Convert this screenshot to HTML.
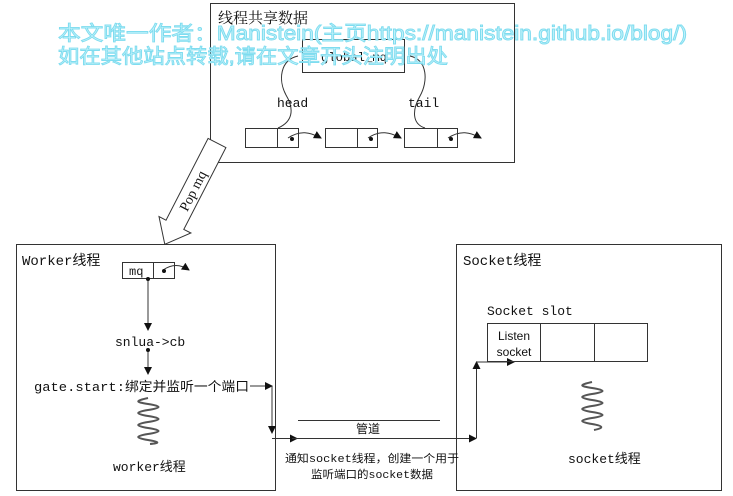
<!DOCTYPE html>
<html><head><meta charset="utf-8"><style>
html,body{margin:0;padding:0;background:#fff;width:733px;height:496px;overflow:hidden}
svg{display:block}
.s{font-family:"Liberation Serif","Noto Serif CJK SC",serif;fill:#111}
.m{font-family:"Liberation Mono","Noto Sans CJK SC",monospace;fill:#111}
.a{font-family:"Liberation Sans","Noto Sans CJK SC",sans-serif;fill:#111}
.w{font-family:"Liberation Sans","Noto Sans CJK SC",sans-serif;fill:#c4f3fb;stroke:#7fdcef;stroke-width:0.9}
</style></head><body>
<svg width="733" height="496" viewBox="0 0 733 496" xmlns="http://www.w3.org/2000/svg">
<defs>
<marker id="ar" markerWidth="8" markerHeight="8" refX="7" refY="4" orient="auto" markerUnits="userSpaceOnUse"><path d="M0,0 L8,4 L0,8 Z" fill="#111"/></marker>
</defs>
<g fill="none" stroke="#333" stroke-width="1">
<rect x="210.5" y="3.5" width="304" height="159"/>
<rect x="302.5" y="39.5" width="102" height="33"/>
<rect x="245.5" y="128.5" width="53" height="19"/><line x1="277.5" y1="128" x2="277.5" y2="147"/>
<rect x="325.5" y="128.5" width="52" height="19"/><line x1="357.5" y1="128" x2="357.5" y2="147"/>
<rect x="404.5" y="128.5" width="53" height="19"/><line x1="437.5" y1="128" x2="437.5" y2="147"/>
<path d="M298,56 C280,60 278,80 286,95 C295,110 292,122 278,128"/>
<path d="M410,56 C428,60 428,82 420,96 C412,110 412,124 425,128"/>
<path d="M288,138 C300,130 310,132 321,138" marker-end="url(#ar)"/>
<path d="M368,138 C380,130 390,132 401,138" marker-end="url(#ar)"/>
<path d="M448,138 C460,130 470,132 481,138" marker-end="url(#ar)"/>
<path d="M208.1,138.4 L225.9,147.6 L183.8,229.4 L190.9,233 L164.8,244.3 L159,216.6 L166,220.2 Z" fill="#fff"/>
<rect x="16.5" y="244.5" width="259" height="246"/>
<rect x="122.5" y="262.5" width="52" height="16"/><line x1="153.5" y1="262" x2="153.5" y2="279"/>
<path d="M163,270 C172,264 180,264 189,270" marker-end="url(#ar)"/>
<line x1="148" y1="279" x2="148" y2="330" marker-end="url(#ar)"/>
<line x1="148" y1="350" x2="148" y2="374" marker-end="url(#ar)"/>
<line x1="250" y1="386" x2="272" y2="386" marker-end="url(#ar)"/>
<line x1="272" y1="386" x2="272" y2="433" marker-end="url(#ar)"/>
<line x1="272" y1="438.5" x2="297" y2="438.5" marker-end="url(#ar)"/>
<line x1="292" y1="438.5" x2="476" y2="438.5"/>
<line x1="458" y1="438.5" x2="476" y2="438.5" marker-end="url(#ar)"/>
<line x1="476.5" y1="438" x2="476.5" y2="362" marker-end="url(#ar)"/>
<line x1="476" y1="362" x2="514" y2="362" marker-end="url(#ar)"/>
<line x1="298" y1="420.5" x2="440" y2="420.5"/>
<rect x="456.5" y="244.5" width="265" height="246"/>
<rect x="487.5" y="323.5" width="160" height="38"/>
<line x1="540.5" y1="323" x2="540.5" y2="362"/><line x1="594.5" y1="323" x2="594.5" y2="362"/>
</g>
<g fill="#111">
<circle cx="292" cy="139" r="2"/><circle cx="371" cy="139" r="2"/><circle cx="451" cy="139" r="2"/>
<circle cx="164" cy="271" r="2"/><circle cx="148" cy="279" r="2"/><circle cx="148" cy="350" r="2"/>
</g>
<g fill="none" stroke="#555" stroke-width="2">
<path d="M148,398 C135,401 135,402 148,404 C162,406 162,408 148,410 C135,412 135,414 148,416 C162,418 162,420 148,422 C135,424 135,426 148,428 C162,430 162,432 148,434 C135,436 135,438 148,440 C160,442 160,443 150,444"/>
<path d="M592,382 C579,385 579,386 592,388 C606,390 606,392 592,394 C579,396 579,398 592,400 C606,402 606,404 592,406 C579,408 579,410 592,412 C606,414 606,416 592,418 C579,420 579,422 592,424 C604,426 604,428 594,430"/>
</g>
<text class="s" x="218" y="23" font-size="15">线程共享数据</text>
<text class="m" x="321" y="61" font-size="12" textLength="66" lengthAdjust="spacingAndGlyphs">global_mq</text>
<text class="m" x="277" y="107" font-size="13">head</text>
<text class="m" x="408" y="107" font-size="13">tail</text>
<text class="s" font-size="14" transform="translate(197,193) rotate(-63)" text-anchor="middle">Pop mq</text>
<text class="m" x="22" y="265" font-size="14">Worker线程</text>
<text class="m" x="129" y="275" font-size="12">mq</text>
<text class="m" x="115" y="346" font-size="13">snlua-&gt;cb</text>
<text class="m" x="34" y="391" font-size="13" textLength="215" lengthAdjust="spacingAndGlyphs">gate.start:绑定并监听一个端口</text>
<text class="m" x="113" y="471" font-size="13">worker线程</text>
<text class="a" x="356" y="433" font-size="12">管道</text>
<text class="m" x="372" y="462" font-size="11" text-anchor="middle" textLength="174" lengthAdjust="spacingAndGlyphs">通知socket线程，创建一个用于</text>
<text class="m" x="372" y="478" font-size="11" text-anchor="middle" textLength="122" lengthAdjust="spacingAndGlyphs">监听端口的socket数据</text>
<text class="m" x="463" y="265" font-size="14">Socket线程</text>
<text class="m" x="487" y="315" font-size="13">Socket slot</text>
<text class="a" x="514" y="340" font-size="12" text-anchor="middle">Listen</text>
<text class="a" x="514" y="356" font-size="12" text-anchor="middle">socket</text>
<text class="m" x="568" y="463" font-size="13">socket线程</text>
<text class="w" x="58" y="40" font-size="20" textLength="629" lengthAdjust="spacingAndGlyphs">本文唯一作者：Manistein(主页https://manistein.github.io/blog/)</text>
<text class="w" x="58" y="63" font-size="20" textLength="390" lengthAdjust="spacingAndGlyphs">如在其他站点转载,请在文章开头注明出处</text>
</svg>
</body></html>
